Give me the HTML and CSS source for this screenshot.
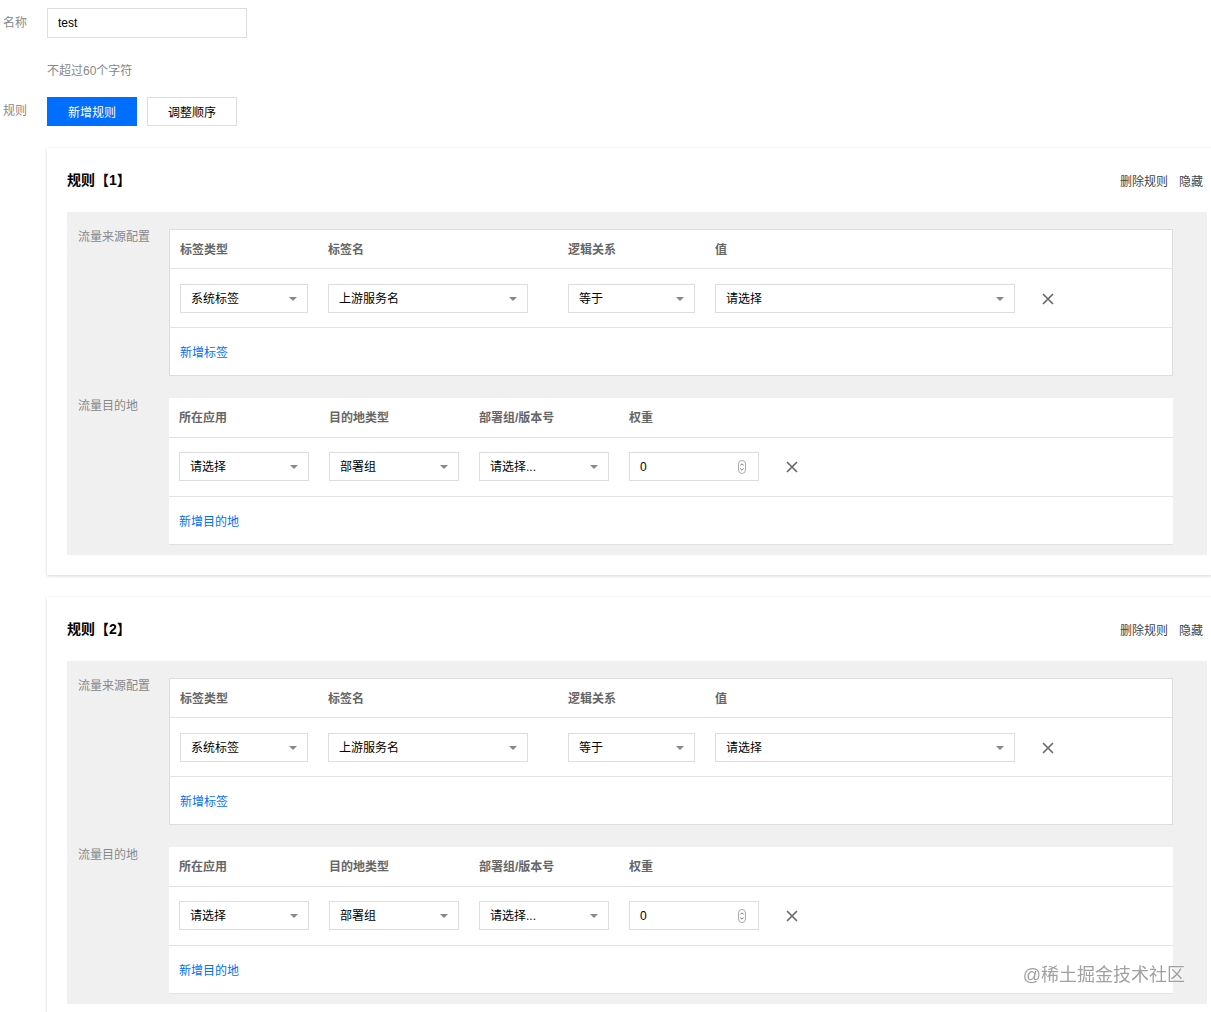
FILE: index.html
```html
<!DOCTYPE html>
<html lang="zh-CN">
<head>
    <meta charset="UTF-8">
    <title>路由规则</title>
    <link rel="stylesheet" href="styles.css">
</head>
<body>
    <div class="page">
        <!-- 名称 -->
        <div class="form-row">
            <div class="form-label">名称</div>
            <div class="form-ctrl">
                <input class="name-input" type="text" value="test">
                <div class="help">不超过60个字符</div>
            </div>
        </div>

        <!-- 规则按钮 -->
        <div class="form-row rules-row">
            <div class="form-label">规则</div>
            <div class="form-ctrl btns">
                <button class="btn btn-primary">新增规则</button>
                <button class="btn">调整顺序</button>
            </div>
        </div>

        <!-- 规则 1 -->
        <div class="rule-card">
            <div class="rule-head">
                <h3 class="rule-title">规则【1】</h3>
                <div class="rule-actions"><a>删除规则</a><a>隐藏</a></div>
            </div>
            <div class="rule-body">
                <div class="section">
                    <div class="section-label">流量来源配置</div>
                    <div class="tbl">
                        <div class="tr th">
                            <div class="c c-type">标签类型</div>
                            <div class="c c-name">标签名</div>
                            <div class="c c-logic">逻辑关系</div>
                            <div class="c c-val">值</div>
                        </div>
                        <div class="tr td">
                            <div class="c c-type"><div class="select">系统标签<i class="caret"></i></div></div>
                            <div class="c c-name"><div class="select">上游服务名<i class="caret"></i></div></div>
                            <div class="c c-logic"><div class="select">等于<i class="caret"></i></div></div>
                            <div class="c c-val"><div class="select">请选择<i class="caret"></i></div></div>
                            <svg class="del" width="12" height="12" viewBox="0 0 12 12"><path d="M1 1L11 11M11 1L1 11" stroke="#666" stroke-width="1.6"/></svg>
                        </div>
                        <div class="tr tf"><a class="link">新增标签</a></div>
                    </div>
                </div>
                <div class="section">
                    <div class="section-label">流量目的地</div>
                    <div class="tbl plain">
                        <div class="tr th">
                            <div class="c c-d">所在应用</div>
                            <div class="c c-d">目的地类型</div>
                            <div class="c c-d">部署组/版本号</div>
                            <div class="c c-d">权重</div>
                        </div>
                        <div class="tr td">
                            <div class="c c-d"><div class="select">请选择<i class="caret"></i></div></div>
                            <div class="c c-d"><div class="select">部署组<i class="caret"></i></div></div>
                            <div class="c c-d"><div class="select">请选择...<i class="caret"></i></div></div>
                            <div class="c c-d"><div class="select">0<svg class="spin" width="8" height="14" viewBox="0 0 8 14"><rect x="0.5" y="0.5" width="7" height="13" rx="3.5" fill="#fff" stroke="#aaa"/><path d="M2.3 5.5L4 3.8 5.7 5.5M2.3 8.5L4 10.2 5.7 8.5" fill="none" stroke="#666" stroke-width="0.9"/></svg></div></div>
                            <svg class="del" width="12" height="12" viewBox="0 0 12 12"><path d="M1 1L11 11M11 1L1 11" stroke="#666" stroke-width="1.6"/></svg>
                        </div>
                        <div class="tr tf"><a class="link">新增目的地</a></div>
                    </div>
                </div>
            </div>
        </div>

        <!-- 规则 2 -->
        <div class="rule-card">
            <div class="rule-head">
                <h3 class="rule-title">规则【2】</h3>
                <div class="rule-actions"><a>删除规则</a><a>隐藏</a></div>
            </div>
            <div class="rule-body">
                <div class="section">
                    <div class="section-label">流量来源配置</div>
                    <div class="tbl">
                        <div class="tr th">
                            <div class="c c-type">标签类型</div>
                            <div class="c c-name">标签名</div>
                            <div class="c c-logic">逻辑关系</div>
                            <div class="c c-val">值</div>
                        </div>
                        <div class="tr td">
                            <div class="c c-type"><div class="select">系统标签<i class="caret"></i></div></div>
                            <div class="c c-name"><div class="select">上游服务名<i class="caret"></i></div></div>
                            <div class="c c-logic"><div class="select">等于<i class="caret"></i></div></div>
                            <div class="c c-val"><div class="select">请选择<i class="caret"></i></div></div>
                            <svg class="del" width="12" height="12" viewBox="0 0 12 12"><path d="M1 1L11 11M11 1L1 11" stroke="#666" stroke-width="1.6"/></svg>
                        </div>
                        <div class="tr tf"><a class="link">新增标签</a></div>
                    </div>
                </div>
                <div class="section">
                    <div class="section-label">流量目的地</div>
                    <div class="tbl plain">
                        <div class="tr th">
                            <div class="c c-d">所在应用</div>
                            <div class="c c-d">目的地类型</div>
                            <div class="c c-d">部署组/版本号</div>
                            <div class="c c-d">权重</div>
                        </div>
                        <div class="tr td">
                            <div class="c c-d"><div class="select">请选择<i class="caret"></i></div></div>
                            <div class="c c-d"><div class="select">部署组<i class="caret"></i></div></div>
                            <div class="c c-d"><div class="select">请选择...<i class="caret"></i></div></div>
                            <div class="c c-d"><div class="select">0<svg class="spin" width="8" height="14" viewBox="0 0 8 14"><rect x="0.5" y="0.5" width="7" height="13" rx="3.5" fill="#fff" stroke="#aaa"/><path d="M2.3 5.5L4 3.8 5.7 5.5M2.3 8.5L4 10.2 5.7 8.5" fill="none" stroke="#666" stroke-width="0.9"/></svg></div></div>
                            <svg class="del" width="12" height="12" viewBox="0 0 12 12"><path d="M1 1L11 11M11 1L1 11" stroke="#666" stroke-width="1.6"/></svg>
                        </div>
                        <div class="tr tf"><a class="link">新增目的地</a></div>
                    </div>
                </div>
            </div>
        </div>
    </div>

    <div class="watermark">@稀土掘金技术社区</div>
</body>
</html>
```

FILE: styles.css
```css
body {
    margin: 0;
    font-family: "Liberation Sans", "Noto Sans CJK SC", sans-serif;
    font-size: 12px;
    color: #000;
    background: #fff;
    overflow-x: hidden;
}
.page {
    padding: 8px 0 0 3px;
}

/* form rows */
.form-row {
    display: flex;
}
.form-label {
    width: 44px;
    line-height: 30px;
    color: #888;
}
.name-input {
    display: block;
    width: 200px;
    height: 30px;
    box-sizing: border-box;
    border: 1px solid #ddd;
    padding: 0 10px;
    font: inherit;
    color: #000;
    outline: none;
}
.help {
    margin-top: 24px;
    line-height: 18px;
    color: #888;
}
.rules-row {
    margin-top: 17px;
}
.rules-row .form-label {
    line-height: 29px;
}
.btns {
    display: flex;
    gap: 10px;
}
.btn {
    width: 90px;
    height: 29px;
    border: 1px solid #ddd;
    background: #fff;
    font: inherit;
    color: #000;
    padding: 0;
    cursor: pointer;
}
.btn-primary {
    background: #006eff;
    border-color: #006eff;
    color: #fff;
}

/* rule card */
.rule-card {
    margin: 22px 0 0 44px;
    padding: 0 4px 20px 20px;
    background: #fff;
    box-shadow: 0 1px 3px rgba(0, 0, 0, 0.18);
}
.rule-head {
    display: flex;
    justify-content: space-between;
    align-items: center;
    padding: 22px 4px 22px 0;
}
.rule-title {
    margin: 0;
    font-size: 14px;
    line-height: 20px;
    font-weight: bold;
}
.rule-actions a {
    color: #444;
    margin-left: 11px;
}
.rule-body {
    background: #f0f0f0;
    padding: 17px 34px 10px 11px;
}
.section {
    display: flex;
}
.section + .section {
    margin-top: 22px;
}
.section-label {
    width: 91px;
    flex-shrink: 0;
    color: #888;
    line-height: 14px;
    padding-top: 1px;
}

/* table */
.tbl {
    flex: 1;
    background: #fff;
    border: 1px solid #ddd;
}
.tbl.plain {
    border-width: 0 0 1px 0;
    border-color: #e2e2e2;
}
.tr {
    display: flex;
    align-items: center;
    padding-left: 10px;
    border-bottom: 1px solid #e2e2e2;
}
.th {
    height: 39px;
    padding-bottom: 2px;
    box-sizing: border-box;
    color: #666;
    font-weight: bold;
}
.tbl.plain .th {
    height: 40px;
}
.td {
    padding-top: 15px;
    padding-bottom: 14px;
}
.tbl.plain .td {
    padding-top: 14px;
    padding-bottom: 15px;
}
.tf {
    height: 47px;
    padding-bottom: 1px;
    box-sizing: border-box;
    border-bottom: none;
}
.c {
    flex-shrink: 0;
}
.c-type { width: 148px; }
.c-name { width: 240px; }
.c-logic { width: 147px; }
.c-val { width: 300px; }
.c-d { width: 150px; }
.c-type .select { width: 128px; }
.c-name .select { width: 200px; }
.c-logic .select { width: 127px; }
.c-val .select { width: 300px; }
.c-d .select { width: 130px; }

.select {
    position: relative;
    height: 29px;
    line-height: 28px;
    box-sizing: border-box;
    border: 1px solid #ddd;
    padding-left: 10px;
    color: #000;
    background: #fff;
}
.caret {
    position: absolute;
    right: 10px;
    top: 12px;
    width: 0;
    height: 0;
    border-left: 4px solid transparent;
    border-right: 4px solid transparent;
    border-top: 4px solid #888;
}
.spin {
    position: absolute;
    right: 12px;
    top: 7px;
}
.del {
    margin-left: 27px;
}
.c-d + .del {
    margin-left: 7px;
}
.link {
    color: #006eff;
}

.watermark {
    position: fixed;
    right: 26px;
    bottom: 26px;
    font-size: 18px;
    color: rgba(120, 120, 120, 0.7);
    text-shadow: 0 0 2px #fff;
}
```
